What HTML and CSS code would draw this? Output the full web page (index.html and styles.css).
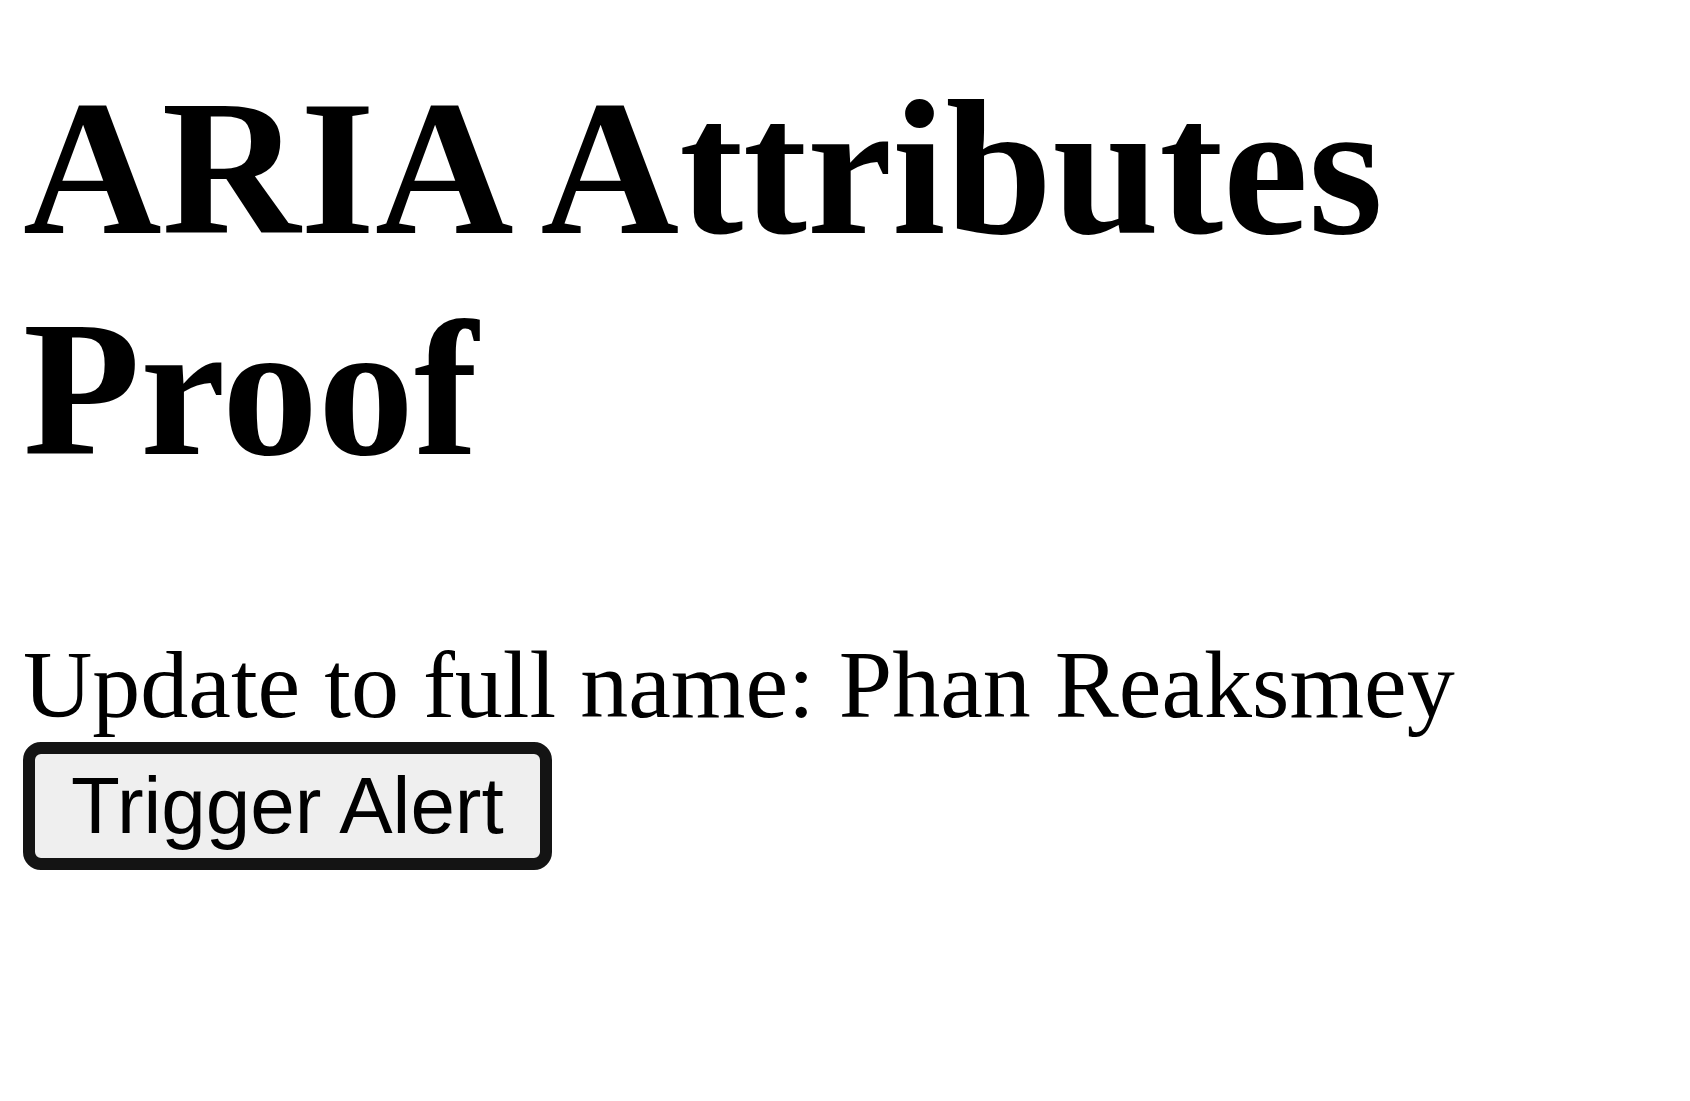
FILE: index.html
```html
<!DOCTYPE html>
<html lang="en">
<head>
<meta charset="utf-8">
<title>ARIA Attributes Proof</title>
<link rel="stylesheet" href="styles.css">
</head>
<body>
<main class="page">
  <h1 class="title">ARIA Attributes Proof</h1>
  <div class="status" role="status" aria-live="polite">Update to full name: Phan Reaksmey</div>
  <div class="actions">
    <button class="btn" type="button" aria-label="Trigger Alert">Trigger Alert</button>
  </div>
</main>
</body>
</html>
```

FILE: styles.css
```css
html, body {
  margin: 0;
  padding: 0;
  background: #ffffff;
}

body {
  font-family: "Liberation Serif", "Times New Roman", serif;
  color: #000000;
}

.page {
  padding: 58px 23px 0;
}

.title {
  font-size: 192px;
  font-weight: bold;
  line-height: normal;
  margin: 0 0 129px;
}

.status {
  font-size: 96px;
  line-height: normal;
}

.actions {
  margin-top: 2px;
}

.btn {
  font-family: "Liberation Sans", Arial, sans-serif;
  font-size: 80px;
  line-height: normal;
  color: #000000;
  background: #efefef;
  border: 12px solid #141414;
  border-radius: 18px;
  padding: 6px 36px;
  margin: 0;
}
```
